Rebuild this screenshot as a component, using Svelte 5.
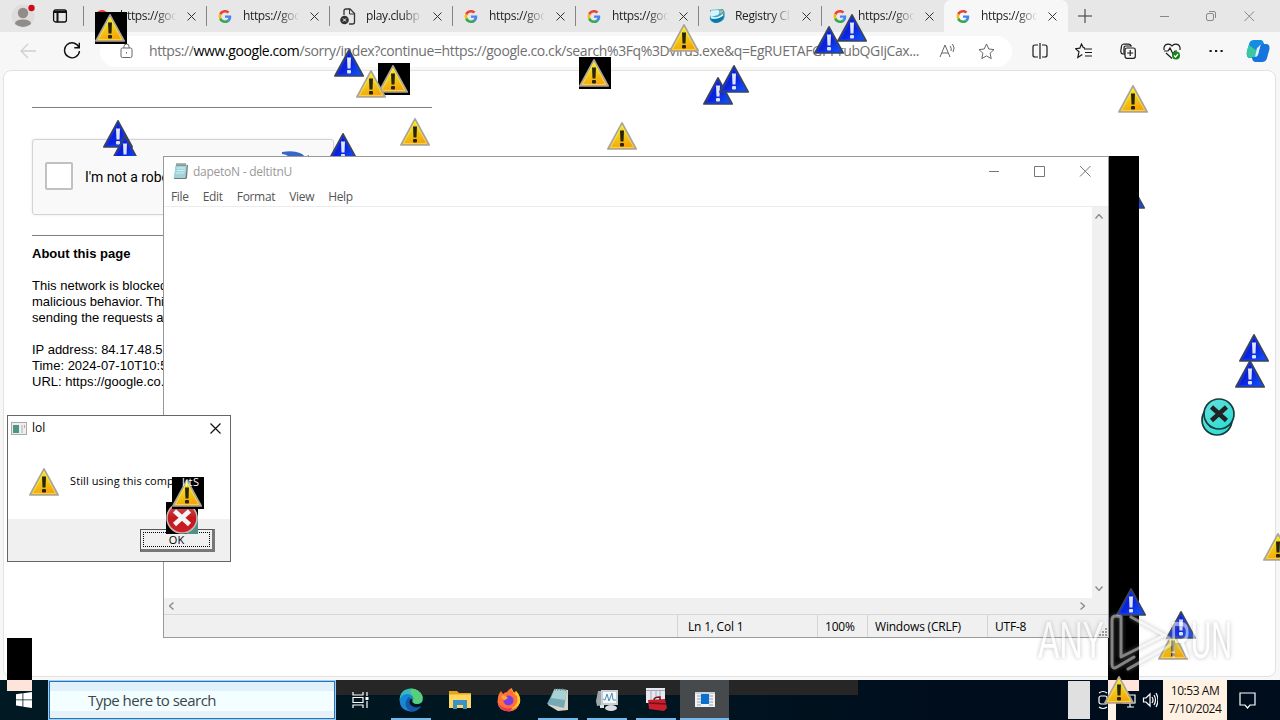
<script>
  const tabs = [
    { title: "https://goo", icon: "google" },
    { title: "https://goo", icon: "google" },
    { title: "play.clubp", icon: "file" },
    { title: "https://goo", icon: "google" },
    { title: "https://goo", icon: "google" },
    { title: "Registry Cl", icon: "registry" },
    { title: "https://goo", icon: "google" },
    { title: "https://goo", icon: "google", active: true },
  ];

  const menus = ["File", "Edit", "Format", "View", "Help"];

  // icons under the windows
  const backMarks = [
    { kind: "blue", x: 103, y: 118 },
    { kind: "blue", x: 110, y: 133, h: 23 },
    { kind: "blue", x: 328, y: 131 },
    { kind: "blue", x: 1115, y: 179 },
  ];

  // icons over everything
  const marks = [
    { kind: "yellow", x: 95, y: 12, box: true },
    { kind: "yellow", x: 378, y: 63, box: true },
    { kind: "yellow", x: 356, y: 68 },
    { kind: "yellow", x: 579, y: 57, box: true },
    { kind: "yellow", x: 669, y: 22 },
    { kind: "yellow", x: 607, y: 120 },
    { kind: "yellow", x: 400, y: 116 },
    { kind: "yellow", x: 1118, y: 83 },
    { kind: "yellow", x: 1263, y: 531, w: 17 },
    { kind: "yellow", x: 1158, y: 630 },
    { kind: "yellow", x: 1104, y: 674 },
    { kind: "blue", x: 334, y: 47 },
    { kind: "blue", x: 703, y: 75 },
    { kind: "blue", x: 719, y: 63 },
    { kind: "blue", x: 814, y: 24 },
    { kind: "blue", x: 837, y: 12 },
    { kind: "blue", x: 1239, y: 332 },
    { kind: "blue", x: 1235, y: 358 },
    { kind: "blue", x: 1116, y: 586 },
    { kind: "blue", x: 1166, y: 609 },
    { kind: "cyan", x: 1201, y: 404 },
    { kind: "cyan", x: 1203, y: 398 },
    { kind: "red", x: 166, y: 502, box: true },
    { kind: "yellow", x: 172, y: 477, box: true },
  ];

  const apps = [
    { name: "edge", open: true },
    { name: "folder" },
    { name: "firefox" },
    { name: "notepad", open: true },
    { name: "monitor", open: true },
    { name: "toolbox", open: true },
    { name: "window", open: true, active: true },
  ];
</script>

{#snippet mark(kind)}
  {#if kind === "yellow"}
    <path d="M15 2.800 29.200 29H.9Z" fill="url(#gold)" stroke="#a9a49c" stroke-width="1.700" stroke-linejoin="round" />
    <path d="M15 5.800 26.700 27.400H3.400Z" fill="none" stroke="#ffe860" stroke-width=".7" />
    <path d="M13 10.500h4l-.5 11h-3z" fill="#28240c" />
    <rect x="13" y="23" width="4" height="3.600" rx="1" fill="#28240c" />
  {:else if kind === "blue"}
    <path d="M15 2.800 29.200 29H.9Z" fill="url(#royal)" stroke="#3b4458" stroke-width="1.700" stroke-linejoin="round" />
    <path d="M15 5.800 26.700 27.400H3.400Z" fill="none" stroke="#1740ff" stroke-width=".7" />
    <path d="M13 10.500h4l-.5 11h-3z" fill="#dfe4ff" />
    <rect x="13" y="23" width="4" height="3.600" rx="1" fill="#dfe4ff" />
  {:else if kind === "cyan"}
    <circle cx="16" cy="16" r="15" fill="url(#aqua)" stroke="#173b3b" stroke-width="1.700" />
    <path d="m8.500 9 15 13.500m0-13.500-15 13.500" stroke="#222" stroke-width="4.600" />
  {:else}
    <path d="M28 14h4v18H20z" fill="#4f8f8c" />
    <circle cx="16" cy="16" r="15" fill="url(#crimson)" stroke="#c9b8b8" stroke-width="1.500" />
    <path d="m8.500 9 15 13.500m0-13.500-15 13.500" stroke="#f4f4f4" stroke-width="4.600" />
  {/if}
{/snippet}

{#snippet stamp(m)}
  <svg
    class="mark"
    class:boxed={m.box}
    width={m.w ?? 32}
    height={m.h ?? 32}
    style="left: {m.x}px; top: {m.y}px"
  >
    {@render mark(m.kind)}
  </svg>
{/snippet}

<svg class="defs" width="0" height="0">
  <defs>
    <linearGradient id="gold" x1="0" y1="0" x2=".3" y2="1">
      <stop offset="0" stop-color="#fff200" />
      <stop offset=".6" stop-color="#f0cb18" />
      <stop offset="1" stop-color="#f5a50a" />
    </linearGradient>
    <linearGradient id="royal" x1="0" y1="0" x2="1" y2="1">
      <stop offset="0" stop-color="#0010c8" />
      <stop offset=".55" stop-color="#0c24dc" />
      <stop offset="1" stop-color="#1060ff" />
    </linearGradient>
    <linearGradient id="aqua" x1="0" y1="0" x2="1" y2="1">
      <stop offset="0" stop-color="#67e0dc" />
      <stop offset="1" stop-color="#28dcd4" />
    </linearGradient>
    <linearGradient id="crimson" x1="0" y1="0" x2="0" y2="1">
      <stop offset="0" stop-color="#d45a5a" />
      <stop offset=".5" stop-color="#c0181c" />
      <stop offset="1" stop-color="#d02028" />
    </linearGradient>
  </defs>
</svg>

<div class="screen">
  <header class="tabbar">
    <div class="profile">
      <svg width="24" height="24" viewBox="0 0 24 24">
        <circle cx="12" cy="12" r="11.500" fill="#dedddc" />
        <circle cx="12" cy="9" r="5.200" fill="#8f8c8a" />
        <path d="M4 20q0-4.500 8-4.500t8 4.500q-8 6-16 0z" fill="#8f8c8a" />
        <circle cx="20.500" cy="4" r="3.200" fill="#d00b1c" />
      </svg>
      <svg width="16" height="16" viewBox="0 0 16 16" fill="none" stroke="#111" stroke-width="1.300">
        <rect x="1.600" y="2" width="12.800" height="12" rx="2" />
        <path d="M2 4h12M5.500 4v10" stroke-width="2" />
      </svg>
    </div>
    {#each tabs as tab}
      <div class="tab" class:active={tab.active}>
        {#if tab.icon === "google"}
          <svg width="14" height="13" viewBox="0 0 48 48">
            <path fill="#ea4335" d="M24 9.500c3.500 0 6.700 1.200 9.200 3.600l6.900-6.900C35.900 2.400 30.500 0 24 0 14.600 0 6.500 5.400 2.600 13.200l8 6.200C12.400 13.700 17.700 9.500 24 9.500z" />
            <path fill="#4285f4" d="M47 24.500c0-1.600-.2-3.100-.4-4.500H24v9h12.900c-.6 3-2.200 5.500-4.700 7.200l7.700 6C44.400 38 47 31.800 47 24.500z" />
            <path fill="#fbbc05" d="M10.500 28.600a14.500 14.500 0 0 1 0-9.200l-8-6.200a24 24 0 0 0 0 21.600z" />
            <path fill="#34a853" d="M24 48c6.500 0 11.900-2.100 15.900-5.800l-7.700-6c-2.200 1.500-4.900 2.300-8.200 2.300-6.300 0-11.600-4.200-13.500-9.900l-8 6.200C6.500 42.600 14.600 48 24 48z" />
          </svg>
        {:else if tab.icon === "file"}
          <svg width="16" height="17" viewBox="0 0 16 17" fill="none">
            <path d="M4 7V3q0-2 2-2h4l4.500 4.500V14q0 2-2 2H9" stroke="#333" stroke-width="1.300" />
            <path d="M9.500 1v5H14" stroke="#333" />
            <circle cx="4.500" cy="12" r="4.300" fill="#333" />
            <path d="m3 10.500 3 3m0-3-3 3" stroke="#fff" />
          </svg>
        {:else}
          <svg width="16" height="16" viewBox="0 0 16 16">
            <path d="M1 2 14 1q3 4 1 10-3 4-9 4-6-1-5-6z" fill="#35a8d0" />
            <path d="M2 2.500 9 2q3 2 0 5l-7 2Q0 6 2 2.500z" fill="#d9f3f8" />
            <path d="M1 9q5 4 14-3 0 8-8 9-5-1-6-6z" fill="#0b78a8" />
            <path d="M2 9.500q7 2 12-3" stroke="#fff" fill="none" stroke-width="1.500" />
            <path d="M10 2.500h4.500L12 6z" fill="#e9b45a" />
          </svg>
        {/if}
        <span>{tab.title}</span>
        <svg class="close" width="9" height="9" viewBox="0 0 9 9"><path d="m.5.5 8 8m0-8-8 8" /></svg>
      </div>
    {/each}
    <svg class="plus" width="14" height="14" viewBox="0 0 14 14"><path d="M7 0v14M0 7h14" /></svg>
    <svg class="controls" width="96" height="12" viewBox="0 0 96 12">
      <path d="M1 6.500h9" />
      <rect x="47.500" y="3.500" width="7" height="7" rx="1.500" />
      <path d="M50 1.500h5q1.500 0 1.500 1.500v5" />
      <path d="m85.500 1.500 9.500 9.500m0-9.500-9.500 9.500" />
    </svg>
  </header>

  <div class="toolbar">
    <svg class="nav back" width="18" height="16" viewBox="0 0 18 16"><path d="M17 8H2m7-7L2 8l7 7" /></svg>
    <svg class="nav" width="18" height="18" viewBox="0 0 18 18"><path d="M16 5.500A7.500 7.500 0 1 0 16.500 9M16.300.8v5h-5" /></svg>
    <div class="address">
      <svg class="lock" width="13" height="16" viewBox="0 0 13 16">
        <rect x="1" y="5" width="11" height="9.500" rx="1.500" />
        <path d="M4 5V3.500a2.500 2.500 0 0 1 5 0V5M6.500 9v1.500" />
      </svg>
      <p class="url">https://<b>www.google.com</b>/sorry/index?continue=https://google.co.ck/search%3Fq%3Dvirus.exe&amp;q=EgRUETAFGPPrubQGIjCax...</p>
      <svg class="lock" width="17" height="16" viewBox="0 0 17 16">
        <path d="M1 14 6 2l5 12M3 10h6M11 3q2 2 1 5M13.500 1q3 4 .5 8" />
      </svg>
      <svg class="lock star" width="17" height="17" viewBox="0 0 17 17"><path d="m8.500 1 2.300 5 5.200.6-3.900 3.600 1.100 5.400-4.700-2.700-4.700 2.700 1.100-5.400L1 6.600 6.200 6z" /></svg>
    </div>
    <div class="actions">
      <svg width="16" height="16" viewBox="0 0 16 16"><path d="M8 0v16M6 2H3Q1 2 1 4v8q0 2 2 2h3M10 2h3q2 0 2 2v8q0 2-2 2h-3" /></svg>
      <svg width="18" height="16" viewBox="0 0 18 16"><path d="m10 5-1.800-.5L6.500 1 4.800 5.200.5 5.700 4 8.800 2.800 14.500l4.500-3M9 6h8M10 9.500h7M10 13h7" /></svg>
      <svg width="16" height="16" viewBox="0 0 16 16"><path d="M3 11Q.5 10.500.8 8L1.500 3q.3-2 2.300-2l5 .2q2 .1 2 1.800M4 12V5q0-2 2-2h6" /><rect x="5" y="5" width="10.300" height="10.300" rx="2" /><path d="M10.200 7v6M7.200 10h6" /></svg>
      <svg width="18" height="17" viewBox="0 0 18 17"><path d="M1 7Q.3 1.500 5 1.200 7.500 1 9 3q1.500-2 4-1.800Q17.700 1.500 17 7M1 8h4l2-3 3 6 2-3h2M3 10l6 5.500" /><circle cx="13" cy="12.500" r="4" fill="#16821b" stroke="none" /><path d="m11 12.500 1.500 1.500 2.500-3" stroke="#fff" /></svg>
      <svg width="16" height="16" viewBox="0 0 16 16"><path d="M1.500 8h2.200M7 8h2.200m3.300 0h2.200" stroke-width="2.200" /></svg>
    </div>
    <svg class="copilot" width="24" height="24" viewBox="0 0 24 24">
      <path d="M8 1h7q2 0 2.800 3l.5 2h-3q-2.300 0-3 3l-2 7q-.8 3-3.300 3H4q-4 0-3-6l2-8Q4 1 8 1z" fill="#168ce0" />
      <path d="M3 6q-4 8-1.500 11 1 2 4.500 2 3 0 4-3l1-4z" fill="#3bc7a0" />
      <path d="M16 23H9q-2 0-2.800-3L6 18h3q2.300 0 3-3l2-7q.8-3 3.300-3H20q4 0 3.500 5L21 19q-1 4-5 4z" fill="#1674df" />
      <path d="m11 9 3-2-2 9-3 2z" fill="#d8f5ff" />
    </svg>
  </div>

  <main class="viewport">
    <article class="page">
      <hr />
      <div class="captcha">
        <i class="check"></i>
        <span>I'm not a robo</span>
        <svg width="32" height="20" viewBox="0 0 32 20"><path d="M0 1q11-2 18 1 3 1 5 4l4-2v16H6V5q-3-2-6-2z" fill="#3567c9" /></svg>
      </div>
      <hr />
      <h1>About this page</h1>
      <p>This network is blocked<br />malicious behavior. This<br />sending the requests a</p>
      <p>IP address: 84.17.48.5<br />Time: 2024-07-10T10:5<br />URL: https://google.co.</p>
    </article>
  </main>

  <footer class="taskbar">
    <svg class="start" width="16" height="16" viewBox="0 0 16 16"><path d="M0 2.300 6.500 1.300v6.200H0zM7.300 1.200 16 0v7.500H7.300zM0 8.300h6.500v6.200L0 13.600zM7.300 8.300H16V16l-8.700-1.300z" /></svg>
    <div class="search"><span>Type here to search</span></div>
    <div class="apps">
      <div class="taskview">
        <svg width="17" height="16" viewBox="0 0 17 16" fill="none" stroke="#fff" stroke-width="1.200"><path d="M1 0v3h10V0M1 16v-3h10v3M1 5.500h10v5H1zM15 0v4M15 9v7" /><path d="M13.500 6.500h3" stroke-width="3" /></svg>
      </div>
      {#each apps as app}
        <div class="app" class:open={app.open} class:current={app.active}>
          <svg width="24" height="24" viewBox="0 0 24 24">
            {#if app.name === "edge"}
              <path d="M.5 12Q1 1 12 .5 21 1 23.500 8v5q-1 3-6 3-5-1-4-4 0-3-4-4-5 0-9 4z" fill="#35b8c0" />
              <path d="M12 .5q8 0 11.500 8 1 7-6 7.500-5-1-3.500-4 1-3-2-6.500-1-3 0-5z" fill="#58cf78" />
              <path d="M.5 12Q3 5.500 9 6q5 1 5.500 5-4-1-4.500 3 0 5 6 6 3 0 6-2-4 6-11 5.500Q1 22.500.5 12z" fill="#1687d3" />
              <path d="M9.500 9q-7 9 2.500 14.500 6 .5 10-5-4 2-8 0-6-3-2-8z" fill="#1558a8" />
            {:else if app.name === "folder"}
              <path d="M1 3h8l2 2h12v15H1z" fill="#e5a31b" />
              <path d="M1 6.500h22V20H1z" fill="#ffd75e" />
              <path d="M5 12h14v9h-4v-4H9v4H5z" fill="#3c91c8" />
            {:else if app.name === "firefox"}
              <path d="M1 9q1-4 3-6l2 3q2-2 4-2 3-4 5-4l1 5 3-2q5 5 4 11-2 9-11 9.500Q1 23 .5 14z" fill="#ff7139" />
              <path d="M14 0q1 5 6 8 2 10-7 13 6 0 10-6Q24 8 19 3l-1 3z" fill="#ffca28" />
              <path d="M.5 14q4 8 15 6l-3 3.500Q3 23 .5 14z" fill="#f0325e" />
              <circle cx="11.500" cy="12.500" r="5" fill="#7b3de0" />
              <path d="M4 8q4-2 7 2l-3 2q-2 1-4-4z" fill="#ffa436" />
            {:else if app.name === "notepad"}
              <path d="m9 1 13 1v20l-10 1-10-6z" fill="#d8d5c8" />
              <path d="m8.500 1 12.500 1-3 18L1 16z" fill="#74aab5" />
              <path d="m8.500 1 12.500 1-2 10-14-2z" fill="#a9d2d6" />
              <path d="m9 .5.500 2m2-2 .5 2m2-2 .5 2m2-2 .5 2m2-1.500.5 2" stroke="#777" />
            {:else if app.name === "monitor"}
              <path d="M3 3h8v14l-9 1-1-5z" fill="#9fa6aa" />
              <path d="M6 2h17v15H6z" fill="#c8cdd1" />
              <path d="M8 4h13v11H8z" fill="#f5f9fb" />
              <path d="m8 11 2 1 2-6 2 7 3-8 1 7h3" fill="none" stroke="#4b8fba" />
              <ellipse cx="16" cy="20" rx="6" ry="3" fill="#d9dddf" />
              <path d="M5 17h4v3H5z" fill="#dfe2e4" />
            {:else if app.name === "toolbox"}
              <path d="M2 0h19v15H2z" fill="#e6e7ef" />
              <path d="M2 2.500h19M7 3v9M12 3v7M16 3v6" stroke="#a2a6b8" />
              <path d="m4 12 17-1 2 9-3 3-15-2z" fill="#c71f2b" />
              <path d="M10 12q0-3 6-3v3M5 15l17 1" fill="none" stroke="#701018" stroke-width="1.500" />
            {:else}
              <path d="M2 4h20v15H2z" fill="#f0f2f3" />
              <path d="M2 5h20" stroke="#cdd2d5" stroke-width="2" />
              <path d="M4 8h4m-4 3h4m-4 3h4m-4 3h4m8-9h4m-4 3h4m-4 3h4m-4 3h4" stroke="#9ba0a4" />
              <path d="M8 6h8v10H8z" fill="#0b6fd0" />
            {/if}
          </svg>
        </div>
      {/each}
    </div>
    <div class="tray">
      <i class="blank"></i>
      <svg width="60" height="20" viewBox="0 0 60 20" fill="none" stroke="#fff" stroke-width="1.200">
        <rect x="1" y="6" width="8" height="8" rx="2" />
        <path d="M1 3q4-3 8 0M1 17q4 3 8 0M25 5h12v8H25zM29 17h7M32 13v4" />
        <path d="M45.500 8h2.500l4-4v12l-4-4h-2.500zM54 7q2 3 0 6M56 5q3 5 0 10M58 3q4 7 0 14" />
      </svg>
      <div class="clock">10:53 AM<br />7/10/2024</div>
      <svg class="bell" width="17" height="17" viewBox="0 0 17 17" fill="none" stroke="#fff" stroke-width="1.200"><path d="M1 1h15v12h-5l-2.500 3L6 13H1z" /></svg>
    </div>
  </footer>

  {#each backMarks as m}
    {@render stamp(m)}
  {/each}

  <i class="trail right"></i>
  <i class="trail left"></i>
  <i class="trail corner"></i>

  <section class="notepad">
    <div class="titlebar">
      <svg width="16" height="17" viewBox="0 0 16 17">
        <path d="M3 2h12l-1 13-1 1H1z" fill="#777" />
        <path d="M3 1.500h11L12.500 15H.5z" fill="#9ed4da" />
        <path d="M4 5h8M4 7.500h8M3 10h8" stroke="#d6f2f4" />
        <path d="M4 0v3m2-3v3m2-3v3m2-3v3m2-3v3" stroke="#444" stroke-width=".8" />
      </svg>
      <span>dapetoN - deltitnU</span>
      <svg class="buttons" width="102" height="11" viewBox="0 0 102 11"><path d="M0 5.500h10M45.500.5h10v10h-10zM91 0l10.500 10.500m0-10.500L91 10.500" /></svg>
    </div>
    <nav>
      {#each menus as menu}
        <span>{menu}</span>
      {/each}
    </nav>
    <div class="editor">
      <div class="paper"></div>
      <div class="vscroll">
        <svg width="8" height="5" viewBox="0 0 8 5"><path d="m.5 4.500 3.500-4 3.500 4" /></svg>
        <svg width="8" height="5" viewBox="0 0 8 5"><path d="m.5.5 3.500 4 3.500-4" /></svg>
      </div>
      <div class="hscroll">
        <svg width="5" height="8" viewBox="0 0 5 8"><path d="m4.500.5-4 3.500 4 3.500" /></svg>
        <svg width="5" height="8" viewBox="0 0 5 8"><path d="m.5.5 4 3.500-4 3.500" /></svg>
      </div>
    </div>
    <div class="status">
      <span class="line">Ln 1, Col 1</span>
      <span class="zoom">100%</span>
      <span class="ending">Windows (CRLF)</span>
      <span class="encoding">UTF-8</span>
      <svg width="10" height="10" viewBox="0 0 10 10"><path d="M8 1v2M8 4v2M8 7v2M5 4v2M5 7v2M2 7v2" stroke="#999" stroke-width="2" /></svg>
    </div>
  </section>

  <section class="dialog">
    <div class="caption">
      <svg width="16" height="13" viewBox="0 0 16 13">
        <rect x=".5" y=".5" width="15" height="12" fill="#eee" stroke="#aaa" />
        <path d="M2 3h6v8H2z" fill="#4b9684" />
        <path d="M10 3h2v8h-2z" fill="#c8d4d4" />
        <path d="M13 3h1v3h-1z" fill="#d99" />
      </svg>
      <span>lol</span>
      <svg class="x" width="11" height="11" viewBox="0 0 11 11"><path d="m.5.5 10 10m0-10-10 10" /></svg>
    </div>
    <div class="message">
      <svg width="32" height="32">{@render mark("yellow")}</svg>
      <span>Still using this compu</span>
    </div>
    <div class="bottom">
      <button><span>OK</span></button>
    </div>
  </section>

  {#each marks as m}
    {@render stamp(m)}
  {/each}
  <span class="ghost">lıtS</span>

  <svg class="watermark" width="220" height="64" viewBox="0 0 220 64">
    <g class="logo">
      <text x="2" y="48" textLength="66" lengthAdjust="spacingAndGlyphs">ANY</text>
      <text x="134" y="48" textLength="62" lengthAdjust="spacingAndGlyphs">RUN</text>
      <path d="M85 7q-9-3-9 3v44q0 6 5 3l17-10M85 7v40l44-22M95 7l38 21q5 4 0 8L92 59" />
    </g>
  </svg>
</div>

<style>
  :global(body) {
    margin: 0;
    overflow: hidden;
  }

  .defs {
    position: absolute;
  }

  .screen {
    position: relative;
    width: 1280px;
    height: 720px;
    overflow: hidden;
    display: grid;
    grid-template-rows: 32px 38px 610px 40px;
    background: #f7f7f7;
    font-family: "Open Sans", "Noto Sans", sans-serif;
    font-size: 12px;
    color: #222;
  }

  svg {
    display: block;
    flex: none;
  }

  .tabbar {
    display: flex;
    align-items: center;
    background: #e7e7e7;
  }

  .profile {
    width: 83px;
    display: flex;
    align-items: center;
    gap: 17px;
    padding-left: 11px;
    box-sizing: border-box;
  }

  .tab {
    width: 123px;
    height: 32px;
    box-sizing: border-box;
    padding-left: 11px;
    display: flex;
    align-items: center;
    background: linear-gradient(#858585, #858585) 0 6px / 1px 20px no-repeat;
  }

  .tab.active {
    width: 124px;
    background: #f7f7f7;
    border-radius: 7px 7px 0 0;
  }

  .tab > svg:first-child {
    width: 16px;
  }

  .tab span {
    width: 60px;
    margin: -1px 0 0 10px;
    font-size: 12px;
    white-space: nowrap;
    letter-spacing: -0.35px;
    mask-image: linear-gradient(90deg, #000 60%, transparent 94%);
  }

  .tab .close {
    margin-left: 7px;
    stroke: #333;
  }

  .plus {
    margin-left: 10px;
    stroke: #333;
  }

  .controls {
    margin-left: 67px;
    fill: none;
    stroke: #888;
  }

  .toolbar {
    display: flex;
    align-items: center;
  }

  .nav {
    fill: none;
    stroke: #111;
    stroke-width: 1.4;
    margin-left: 26px;
  }

  .nav.back {
    stroke: #d0d0d0;
    margin-left: 19px;
  }

  .address {
    width: 912px;
    height: 31px;
    margin-left: 19px;
    border-radius: 16px;
    background: #fff;
    display: flex;
    align-items: center;
    box-sizing: border-box;
    padding-left: 20px;
  }

  .lock {
    fill: none;
    stroke: #666;
  }

  .url {
    width: 774px;
    margin: -1px 16px 0 16px;
    font-size: 14px;
    letter-spacing: -0.4px;
    white-space: nowrap;
    color: #707070;
  }

  .url b {
    font-weight: 400;
    color: #000;
  }

  .star {
    margin-left: 22px;
  }

  .actions {
    display: flex;
    align-items: center;
    gap: 27px;
    margin-left: 20px;
    fill: none;
    stroke: #1a1a1a;
    stroke-width: 1.2;
  }

  .copilot {
    margin-left: 22px;
  }

  .viewport {
    padding: 0 4px 3px 3px;
  }

  .page {
    height: 607px;
    box-sizing: border-box;
    border: 1px solid #e2e2e2;
    border-radius: 8px;
    background: #fff;
    padding: 36px 28px;
    font-family: "Liberation Sans", Arial, sans-serif;
    font-size: 13px;
    line-height: 16px;
    color: #000;
  }

  .page hr {
    width: 400px;
    height: 1px;
    margin: 0;
    border: 0;
    background: #808080;
  }

  .captcha {
    width: 302px;
    height: 76px;
    margin: 31px 0 20px;
    box-sizing: border-box;
    border: 1px solid #d3d3d3;
    border-radius: 3px;
    background: #f9f9f9;
    box-shadow: 0 0 3px rgba(0, 0, 0, 0.1);
    display: flex;
    align-items: center;
    padding: 0 0 2px 12px;
    font-family: Roboto, sans-serif;
    font-size: 14px;
    overflow: hidden;
  }

  .captcha .check {
    width: 24px;
    height: 24px;
    border: 2px solid #c1c1c1;
    border-radius: 2px;
    background: #fff;
  }

  .captcha span {
    width: 197px;
    margin: 1px 0 0 12px;
    letter-spacing: -0.05px;
  }

  .captcha svg {
    align-self: flex-start;
    margin-top: 11px;
  }

  .page h1 {
    margin: 10px 0 16px;
    font-size: 13px;
    line-height: 16px;
    letter-spacing: 0.02px;
  }

  .page p {
    margin: 0 0 16px;
  }

  .taskbar {
    position: relative;
    display: flex;
    background: linear-gradient(90deg, #001923, #001621 50%, #000d1c 75%);
  }

  .start {
    margin: 12px 17px 0 16px;
    fill: #fff;
  }

  .search {
    width: 286px;
    height: 38px;
    margin-top: 1px;
    box-sizing: border-box;
    border: 1px solid #2d73b3;
    outline: 1px solid #9ccff5;
    background: linear-gradient(#e1f1fb 25%, #f2feff 25%, #f2feff 80%, #e7f1f8 80%);
    padding-left: 38px;
    display: flex;
    align-items: center;
    font-size: 15px;
    letter-spacing: -0.53px;
    color: #39474d;
  }

  .apps {
    width: 522px;
    margin-left: 1px;
    display: flex;
    background: linear-gradient(#262626, #262626) 0 0 / 100% 15px no-repeat;
  }

  .taskview {
    width: 49px;
    margin-right: 1px;
    display: grid;
    place-items: center;
  }

  .app {
    width: 49px;
    display: grid;
    place-items: center;
    background: linear-gradient(#76b9ed, #76b9ed) 5px 38px / 40px 2px no-repeat;
  }

  .app:not(.open) {
    background: none;
  }

  .app.current {
    background: linear-gradient(#76b9ed, #76b9ed) 0 38px / 49px 2px no-repeat, #474a4d;
  }

  .tray {
    margin-left: auto;
    width: 212px;
    display: flex;
    align-items: center;
  }

  .tray .blank {
    width: 22px;
    height: 38px;
    margin-right: 8px;
    background: #e0e0e0;
  }

  .clock {
    width: 64px;
    height: 40px;
    box-sizing: border-box;
    padding-top: 2px;
    margin-left: 5px;
    background: #fff2e2;
    text-align: center;
    line-height: 18px;
    letter-spacing: -0.45px;
    color: #111;
  }

  .bell {
    margin-left: 12px;
  }

  .mark {
    position: absolute;
  }

  .boxed {
    background: #000;
  }

  .trail {
    position: absolute;
    background: linear-gradient(#000, #000) 0 0 / 100% calc(100% - 11px) no-repeat, #ffe4dc;
  }

  .trail.right {
    left: 1108px;
    top: 156px;
    width: 31px;
    height: 535px;
  }

  .trail.left {
    left: 7px;
    top: 638px;
    width: 25px;
    height: 53px;
  }

  .trail.corner {
    left: 1108px;
    top: 691px;
    width: 8px;
    height: 29px;
    background: #fff2e8;
  }

  .notepad {
    position: absolute;
    left: 163px;
    top: 156px;
    width: 946px;
    height: 482px;
    box-sizing: border-box;
    border: 1px solid #999;
    background: #fff;
    display: flex;
    flex-direction: column;
  }

  .titlebar {
    height: 29px;
    display: flex;
    align-items: center;
    padding: 0 13px 0 9px;
    color: #999;
    letter-spacing: -0.25px;
  }

  .titlebar span {
    margin-left: 4px;
  }

  .buttons {
    margin-left: auto;
    margin-right: 4px;
    fill: none;
    stroke: #777;
  }

  nav {
    height: 20px;
    display: flex;
    gap: 14px;
    padding-left: 7px;
    border-bottom: 1px solid #ececec;
    line-height: 22px;
    letter-spacing: -0.32px;
    color: #555;
  }

  .editor {
    flex: 1;
    display: grid;
    grid-template: 1fr 16px / 1fr 16px;
    background: #f0f0f0;
  }

  .paper {
    background: #fff;
  }

  .vscroll,
  .hscroll {
    display: flex;
    align-items: center;
    justify-content: space-between;
    fill: none;
    stroke: #888;
    stroke-width: 1.3;
  }

  .vscroll {
    flex-direction: column;
    padding: 7px 2px 7px 0;
  }

  .hscroll {
    padding: 0 7px 1px 5px;
  }

  .status {
    height: 22px;
    display: flex;
    justify-content: flex-end;
    border-top: 1px solid #d7d7d7;
    background: #f0f0f0;
    color: #000;
    line-height: 24px;
  }

  .status span {
    box-sizing: border-box;
    border-left: 1px solid #d4d4d4;
    letter-spacing: -0.2px;
  }

  .line {
    width: 140px;
    padding-left: 10px;
  }

  .zoom {
    width: 50px;
    padding-left: 7px;
  }

  .ending {
    width: 120px;
    padding-left: 7px;
  }

  .encoding {
    width: 111px;
    padding-left: 7px;
  }

  .status svg {
    align-self: flex-end;
  }

  .dialog {
    position: absolute;
    left: 7px;
    top: 415px;
    width: 224px;
    height: 147px;
    box-sizing: border-box;
    border: 1px solid #666;
    background: #fff;
    display: flex;
    flex-direction: column;
    color: #000;
  }

  .caption {
    height: 23px;
    display: flex;
    align-items: center;
    padding: 1px 9px 0 3px;
  }

  .caption span {
    margin: -2px 0 0 5px;
  }

  .caption .x {
    margin-left: auto;
    stroke: #111;
    stroke-width: 1.2;
  }

  .message {
    flex: 1;
    display: flex;
    align-items: flex-start;
    padding: 26px 0 0 21px;
    font-size: 11px;
  }

  .message span {
    margin: 7px 0 0 9px;
    letter-spacing: 0.1px;
    white-space: nowrap;
  }

  .ghost {
    position: absolute;
    left: 182px;
    top: 474px;
    font-size: 11px;
    letter-spacing: 0.5px;
    color: #fff;
  }

  .bottom {
    height: 42px;
    background: #f0f0f0;
    display: flex;
    justify-content: flex-end;
    align-items: flex-start;
    padding: 10px 15px 0 0;
    box-sizing: border-box;
  }

  button {
    width: 75px;
    height: 23px;
    padding: 2px;
    border: 1px solid #555;
    border-right: 3px solid #777;
    border-bottom: 3px solid #777;
    background: #f0f0f0;
    font: 11px "Open Sans", "Noto Sans", sans-serif;
    color: #000;
  }

  button span {
    display: block;
    height: 15px;
    line-height: 14px;
    border: 1px dotted #000;
    box-sizing: border-box;
  }

  .watermark {
    position: absolute;
    left: 1036px;
    top: 610px;
  }

  .logo {
    fill: #fff;
    opacity: 0.55;
    filter: drop-shadow(0 0 2px #888);
    font: 52px "Liberation Sans", Arial, sans-serif;
  }

  .logo path {
    fill: none;
    stroke: #f2f2f2;
    stroke-width: 3;
    stroke-linejoin: round;
    stroke-linecap: round;
  }
</style>
